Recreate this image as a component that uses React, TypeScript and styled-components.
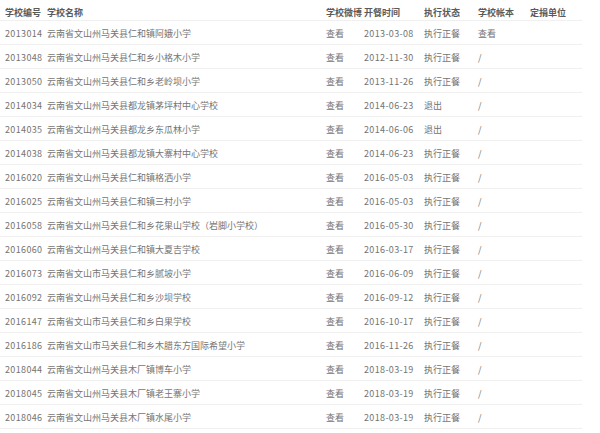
import React from "react";
import styled, { createGlobalStyle } from "styled-components";

const Global = createGlobalStyle`
  html, body { margin: 0; padding: 0; background: #fff; }
  body { font-family: "Noto Sans CJK SC", "Noto Sans", sans-serif; }
`;

const Table = styled.div`
  width: 582px;
  display: flex;
  flex-direction: column;
`;

const cols = "42px 279px 38px 60px 54px 52px 1fr";

const HeadRow = styled.div`
  display: grid;
  grid-template-columns: ${cols};
  height: 21px;
  align-items: end;
  padding: 0 0 1px 5px;
  box-sizing: border-box;
  border-bottom: 1px solid #f0f0f0;
  font-size: 9px;
  font-weight: 700;
  color: #5a5a5a;
  line-height: 12px;
  white-space: nowrap;
`;

const Row = styled.div`
  display: grid;
  grid-template-columns: ${cols};
  height: 24px;
  align-items: center;
  padding: 2px 0 0 5px;
  box-sizing: border-box;
  border-bottom: 1px solid #f0f0f0;
  font-size: 9px;
  color: #747474;
  line-height: 12px;
  white-space: nowrap;
`;

const Cell = styled.span<{ $num?: boolean }>`
  letter-spacing: ${(p) => (p.$num ? "0.35px" : "0")};
`;

type R = [string, string, string, string, string];
const rows: R[] = [
  ["2013014", "云南省文山州马关县仁和镇阿娥小学", "2013-03-08", "执行正餐", "查看"],
  ["2013048", "云南省文山州马关县仁和乡小格木小学", "2012-11-30", "执行正餐", "/"],
  ["2013050", "云南省文山州马关县仁和乡老岭坝小学", "2013-11-26", "执行正餐", "/"],
  ["2014034", "云南省文山州马关县都龙镇茅坪村中心学校", "2014-06-23", "退出", "/"],
  ["2014035", "云南省文山州马关县都龙乡东瓜林小学", "2014-06-06", "退出", "/"],
  ["2014038", "云南省文山州马关县都龙镇大寨村中心学校", "2014-06-23", "执行正餐", "/"],
  ["2016020", "云南省文山州马关县仁和镇格洒小学", "2016-05-03", "执行正餐", "/"],
  ["2016025", "云南省文山州马关县仁和镇三村小学", "2016-05-03", "执行正餐", "/"],
  ["2016058", "云南省文山州马关县仁和乡花果山学校（岩脚小学校）", "2016-05-30", "执行正餐", "/"],
  ["2016060", "云南省文山州马关县仁和镇大夏吉学校", "2016-03-17", "执行正餐", "/"],
  ["2016073", "云南省文山市马关县仁和乡腻坡小学", "2016-06-09", "执行正餐", "/"],
  ["2016092", "云南省文山州马关县仁和乡沙坝学校", "2016-09-12", "执行正餐", "/"],
  ["2016147", "云南省文山市马关县仁和乡白果学校", "2016-10-17", "执行正餐", "/"],
  ["2016186", "云南省文山市马关县仁和乡木腊东方国际希望小学", "2016-11-26", "执行正餐", "/"],
  ["2018044", "云南省文山州马关县木厂镇博车小学", "2018-03-19", "执行正餐", "/"],
  ["2018045", "云南省文山州马关县木厂镇老王寨小学", "2018-03-19", "执行正餐", "/"],
  ["2018046", "云南省文山州马关县木厂镇水尾小学", "2018-03-19", "执行正餐", "/"],
];

export default function App() {
  return (
    <>
      <Global />
      <Table>
        <HeadRow>
          <Cell>学校编号</Cell>
          <Cell>学校名称</Cell>
          <Cell>学校微博</Cell>
          <Cell>开餐时间</Cell>
          <Cell>执行状态</Cell>
          <Cell>学校帐本</Cell>
          <Cell>定捐单位</Cell>
        </HeadRow>
        {rows.map((r) => (
          <Row key={r[0]}>
            <Cell $num>{r[0]}</Cell>
            <Cell>{r[1]}</Cell>
            <Cell>查看</Cell>
            <Cell $num>{r[2]}</Cell>
            <Cell>{r[3]}</Cell>
            <Cell>{r[4]}</Cell>
            <Cell></Cell>
          </Row>
        ))}
      </Table>
    </>
  );
}
